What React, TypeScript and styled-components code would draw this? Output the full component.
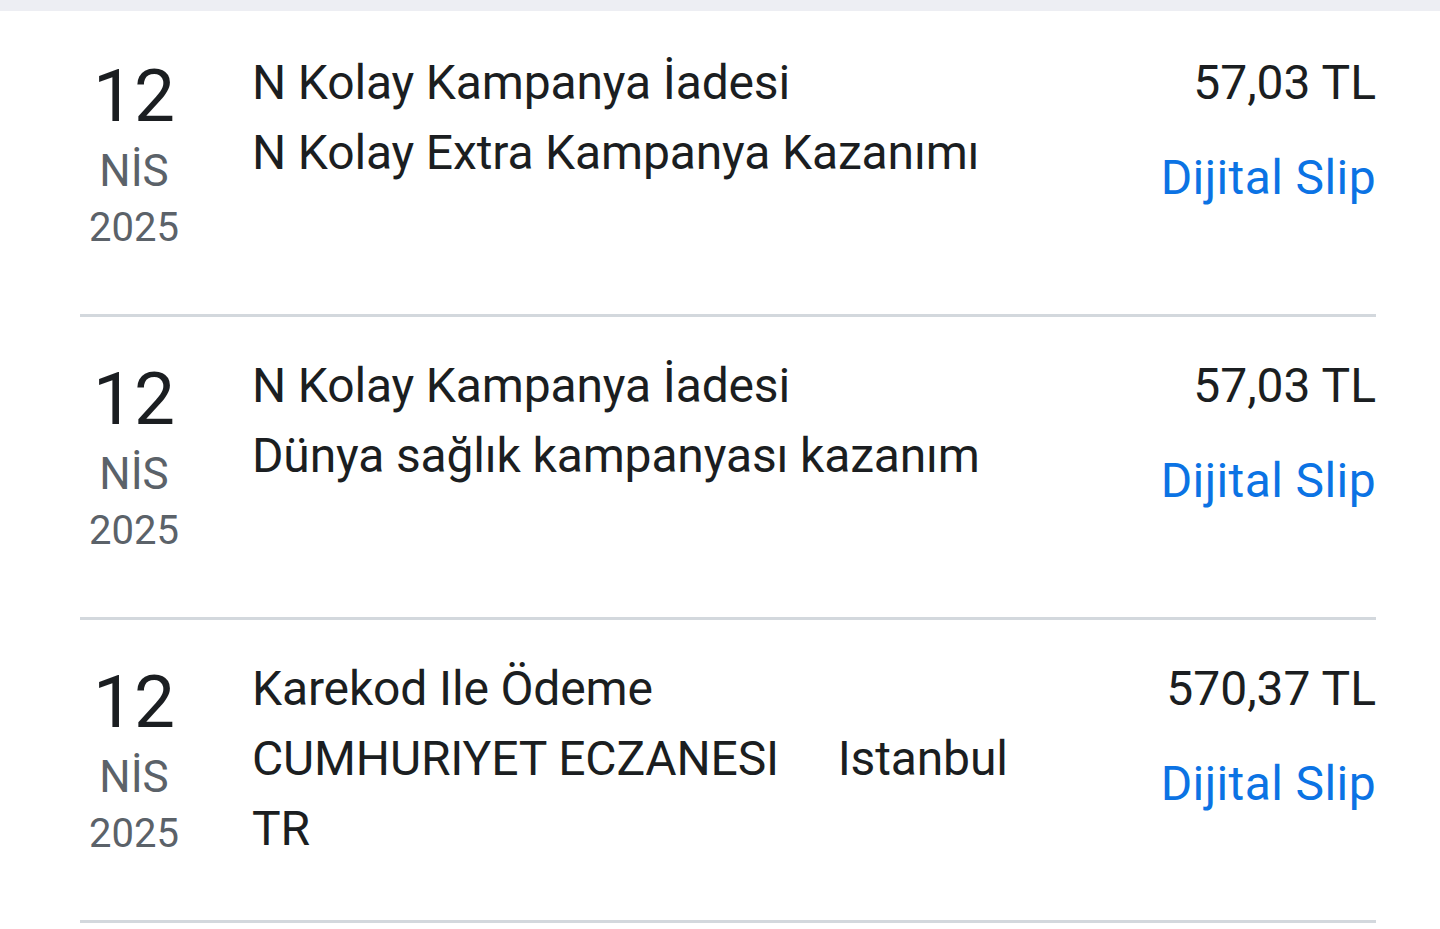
import React from "react";
import styled, { createGlobalStyle } from "styled-components";

const Global = createGlobalStyle`
  html, body { margin: 0; padding: 0; background: #ffffff; }
  body { font-family: Roboto, "Noto Sans", sans-serif; color: #1b1e21; }
`;

const Page = styled.div`
  width: 1440px;
  background: #ffffff;
`;

const TopBar = styled.div`
  height: 11px;
  background: #edeef3;
`;

const List = styled.div`
  display: flex;
  flex-direction: column;
  padding: 3px 64px 0 80px;
`;

const Row = styled.div`
  display: flex;
  align-items: flex-start;
  min-height: 303px;
  box-sizing: border-box;
  padding-top: 34px;
  border-bottom: 3px solid #d3d8dd;
`;

const DateCol = styled.div`
  width: 108px;
  flex: none;
  display: flex;
  flex-direction: column;
  align-items: center;
  margin-right: 64px;
`;

const Day = styled.div`
  font-size: 73px;
  line-height: 96px;
  color: #1b1e21;
`;

const Month = styled.div`
  font-size: 44px;
  line-height: 54px;
  color: #5b6269;
`;

const Year = styled.div`
  font-size: 40px;
  line-height: 60px;
  color: #5b6269;
`;

const Desc = styled.div`
  flex: 1;
  max-width: 820px;
  font-size: 48px;
  line-height: 70px;
  letter-spacing: -0.15px;
  color: #1b1e21;
  white-space: pre-wrap;
`;

const Right = styled.div`
  margin-left: auto;
  display: flex;
  flex-direction: column;
  align-items: flex-end;
`;

const Amount = styled.div`
  font-size: 48px;
  line-height: 70px;
  color: #1b1e21;
`;

const SlipLink = styled.a`
  margin-top: 25px;
  font-size: 48px;
  line-height: 70px;
  letter-spacing: 0.4px;
  color: #0b73e4;
  text-decoration: none;
  cursor: pointer;
`;

type Tx = { day: string; month: string; year: string; lines: string[]; amount: string };

const items: Tx[] = [
  {
    day: "12",
    month: "NİS",
    year: "2025",
    lines: ["N Kolay Kampanya İadesi", "N Kolay Extra Kampanya Kazanımı"],
    amount: "57,03 TL",
  },
  {
    day: "12",
    month: "NİS",
    year: "2025",
    lines: ["N Kolay Kampanya İadesi", "Dünya sağlık kampanyası kazanım"],
    amount: "57,03 TL",
  },
  {
    day: "12",
    month: "NİS",
    year: "2025",
    lines: ["Karekod Ile Ödeme", "CUMHURIYET ECZANESI     Istanbul     TR"],
    amount: "570,37 TL",
  },
];

export default function App() {
  return (
    <Page>
      <Global />
      <TopBar />
      <List>
        {items.map((t, i) => (
          <Row key={i}>
            <DateCol>
              <Day>{t.day}</Day>
              <Month>{t.month}</Month>
              <Year>{t.year}</Year>
            </DateCol>
            <Desc>
              {t.lines.map((l, j) => (
                <div key={j}>{l}</div>
              ))}
            </Desc>
            <Right>
              <Amount>{t.amount}</Amount>
              <SlipLink>Dijital Slip</SlipLink>
            </Right>
          </Row>
        ))}
      </List>
    </Page>
  );
}
